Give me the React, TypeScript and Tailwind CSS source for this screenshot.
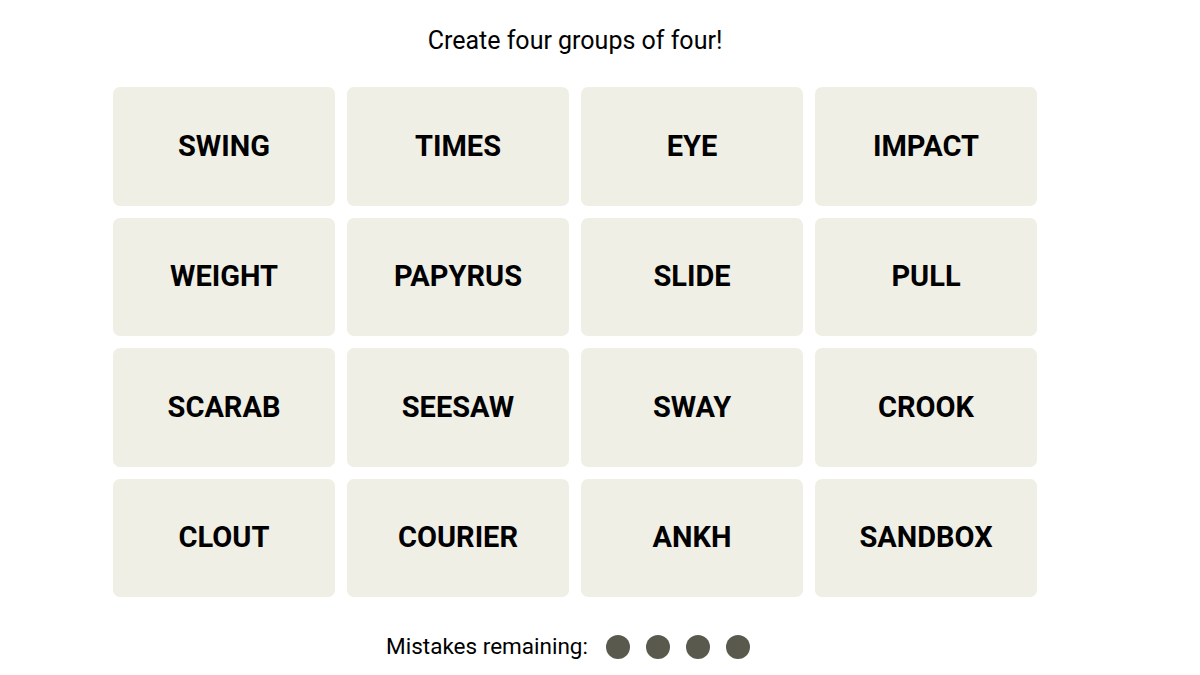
import React from "react";

const words = [
  "SWING", "TIMES", "EYE", "IMPACT",
  "WEIGHT", "PAPYRUS", "SLIDE", "PULL",
  "SCARAB", "SEESAW", "SWAY", "CROOK",
  "CLOUT", "COURIER", "ANKH", "SANDBOX",
];

export default function App() {
  return (
    <div className="w-[1200px] h-[675px] bg-white overflow-hidden">
      <div className="w-[1150px] flex flex-col items-center">
        <h1 className="mt-[24px] h-[34px] leading-[34px] text-[25px] font-normal text-black font-['Roboto',sans-serif]">
          Create four groups of four!
        </h1>
        <div className="mt-[29px] grid grid-cols-[repeat(4,222px)] grid-rows-[repeat(4,118.5px)] gap-[12px]">
          {words.map((w) => (
            <div
              key={w}
              className="bg-[#efefe6] rounded-[7px] flex items-center justify-center text-[29px] font-bold text-black font-['Roboto',sans-serif]"
            >
              {w}
            </div>
          ))}
        </div>
        <div className="mt-[33px] pr-[14px] flex items-center font-['Roboto',sans-serif]">
          <span className="text-[22.5px] text-black mr-[18px]">Mistakes remaining:</span>
          <div className="flex gap-[16px]">
            <span className="w-[24px] h-[24px] rounded-full bg-[#5a594e]" />
            <span className="w-[24px] h-[24px] rounded-full bg-[#5a594e]" />
            <span className="w-[24px] h-[24px] rounded-full bg-[#5a594e]" />
            <span className="w-[24px] h-[24px] rounded-full bg-[#5a594e]" />
          </div>
        </div>
      </div>
    </div>
  );
}
